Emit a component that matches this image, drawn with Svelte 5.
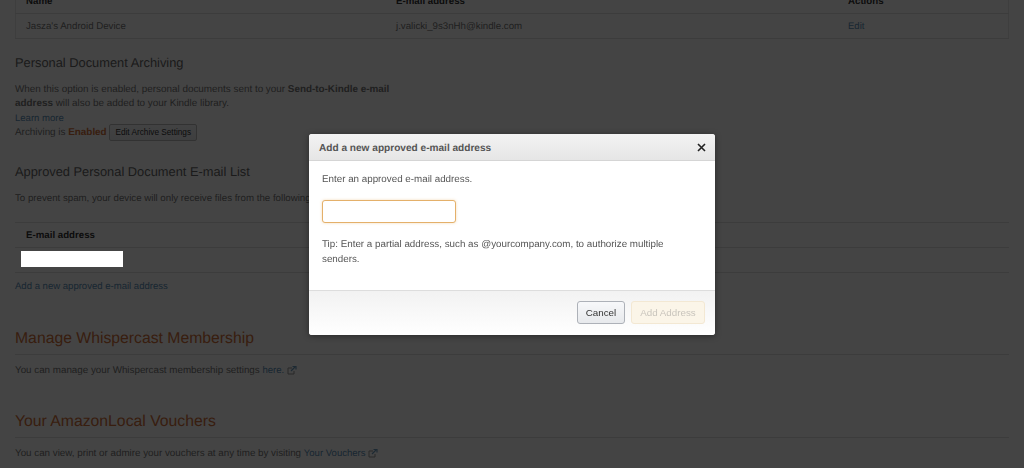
<script>
  let email = '';
</script>

<div class="page">
  <table class="devices">
    <thead>
      <tr>
        <th class="c-name">Name</th>
        <th class="c-mail">E-mail address</th>
        <th>Actions</th>
      </tr>
    </thead>
    <tbody>
      <tr>
        <td>Jasza's Android Device</td>
        <td>j.valicki_9s3nHh@kindle.com</td>
        <td><a href="#edit">Edit</a></td>
      </tr>
    </tbody>
  </table>

  <section class="archiving">
    <h3>Personal Document Archiving</h3>
    <p class="narrow">
      When this option is enabled, personal documents sent to your <b>Send-to-Kindle e-mail address</b> will also be added to your Kindle library.<br />
      <a href="#more">Learn more</a><br />
      Archiving is <b class="enabled">Enabled</b>
      <button class="small">Edit Archive Settings</button>
    </p>
  </section>

  <section class="approved">
    <h3>Approved Personal Document E-mail List</h3>
    <p>To prevent spam, your device will only receive files from the following e-mail addresses you have authorized.</p>
    <div class="list">
      <div class="list-head">E-mail address</div>
      <div class="list-row"><span class="redacted"></span></div>
    </div>
    <a class="add" href="#add">Add a new approved e-mail address</a>
  </section>

  <section class="big first">
    <h2>Manage Whispercast Membership</h2>
    <p>You can manage your Whispercast membership settings <a href="#here">here.</a>
      <svg class="ext" viewBox="0 0 10 10" width="10" height="10"><path d="M1 3h4M1 3v6h6V6" fill="none" stroke="#999" stroke-width="1"/><path d="M4 6l4-4M5.5 1.5H9v3" fill="none" stroke="#6f9cc0" stroke-width="1.2"/></svg>
    </p>
  </section>

  <section class="big">
    <h2>Your AmazonLocal Vouchers</h2>
    <p>You can view, print or admire your vouchers at any time by visiting <a href="#v">Your Vouchers</a>
      <svg class="ext" viewBox="0 0 10 10" width="10" height="10"><path d="M1 3h4M1 3v6h6V6" fill="none" stroke="#999" stroke-width="1"/><path d="M4 6l4-4M5.5 1.5H9v3" fill="none" stroke="#6f9cc0" stroke-width="1.2"/></svg>
    </p>
  </section>
</div>

<div class="overlay"></div>

<div class="dialog" role="dialog" aria-label="Add a new approved e-mail address">
  <header>
    <strong>Add a new approved e-mail address</strong>
    <svg class="close" viewBox="0 0 9 9" width="9" height="9"><path d="M1 1l7 7M8 1l-7 7" stroke="#222" stroke-width="1.6" fill="none"/></svg>
  </header>
  <div class="body">
    <p>Enter an approved e-mail address.</p>
    <input type="text" bind:value={email} />
    <p class="tip">Tip: Enter a partial address, such as @yourcompany.com, to authorize multiple senders.</p>
  </div>
  <footer>
    <button class="cancel">Cancel</button>
    <button class="submit" disabled>Add Address</button>
  </footer>
</div>

<style>
  :global(body) {
    margin: 0;
    background: #fff;
    overflow: hidden;
    text-rendering: geometricPrecision;
  }

  .page {
    height: 468px;
    overflow: hidden;
    box-sizing: border-box;
    padding: 0 15px;
    font: 9.7px/14.3px "Liberation Sans", Arial, sans-serif;
    color: #777;
  }

  a {
    color: #5c8fb8;
    text-decoration: none;
    font-size: 9.55px;
  }

  p {
    margin: 0;
  }

  h3 {
    margin: 0;
    font-size: 12.85px;
    line-height: 16px;
    font-weight: 400;
    color: #666;
  }

  h2 {
    margin: 0;
    padding-bottom: 5px;
    border-bottom: 1px solid #e2e2e2;
    font-size: 15.75px;
    line-height: 20px;
    font-weight: 400;
    color: #d2703a;
  }

  .devices {
    width: 994px;
    margin-top: -11px;
    border-collapse: collapse;
    table-layout: fixed;
    border-left: 1px solid #e8e8e8;
    border-right: 1px solid #e8e8e8;
  }

  .devices th,
  .devices td {
    padding: 2px 10px 0;
    text-align: left;
    height: 22px;
    border-bottom: 1px solid #e2e2e2;
  }

  .devices td {
    padding-top: 3px;
    height: 21px;
  }

  .devices th {
    color: #333;
  }

  .c-name {
    width: 350px;
  }

  .c-mail {
    width: 432px;
  }

  .archiving {
    margin-top: 16px;
  }

  .archiving .narrow {
    width: 392px;
    margin-top: 12px;
    font-size: 9.9px;
  }

  .enabled {
    color: #d2703a;
  }

  .small {
    height: 17px;
    padding: 0 5px;
    margin-left: 0;
    border: 1px solid #bbb;
    border-radius: 2px;
    background: linear-gradient(#f7f8fa, #e7e9ec);
    color: #333;
    font: 8.25px "Liberation Sans", Arial, sans-serif;
    vertical-align: top;
    margin-top: -2px;
  }

  .approved {
    margin-top: 23px;
  }

  .approved p {
    margin-top: 12px;
  }

  .list {
    margin-top: 16px;
    border-top: 1px solid #e2e2e2;
    border-bottom: 1px solid #e2e2e2;
  }

  .list-head {
    height: 24px;
    line-height: 25px;
    padding-left: 11px;
    font-weight: 700;
    color: #333;
    border-bottom: 1px solid #e2e2e2;
  }

  .list-row {
    height: 24px;
    box-sizing: border-box;
    padding: 3px 0 0 6px;
  }

  /* sits above the overlay, it was blanked out in the source */
  .redacted {
    display: block;
    position: relative;
    z-index: 2;
    width: 102px;
    height: 16px;
    background: #fff;
  }

  .add {
    display: block;
    margin-top: 7px;
  }

  .big.first {
    margin-top: 35px;
  }

  .big {
    margin-top: 33px;
  }

  .big p {
    margin-top: 9px;
    font-size: 9.8px;
  }

  .ext {
    vertical-align: -2px;
  }

  .overlay {
    position: fixed;
    inset: 0;
    background: rgba(0, 0, 0, 0.733);
    backdrop-filter: blur(0.5px);
  }

  .dialog {
    position: fixed;
    left: 309px;
    top: 134px;
    width: 406px;
    height: 201px;
    display: flex;
    flex-direction: column;
    background: #fff;
    border-radius: 3px;
    box-shadow: 0 1px 6px rgba(0, 0, 0, 0.4);
    font: 9.8px/14.3px "Liberation Sans", Arial, sans-serif;
    color: #555;
    z-index: 3;
    overflow: hidden;
    filter: blur(0.3px);
  }

  header {
    height: 26px;
    flex: none;
    display: flex;
    align-items: center;
    justify-content: space-between;
    padding: 0 9px 0 10px;
    background: linear-gradient(#f3f3f3, #e6e6e6);
    border-bottom: 1px solid #d5d5d5;
    color: #555;
    font-size: 10.1px;
  }

  header strong {
    padding-top: 4px;
  }

  .body {
    flex: 1;
    padding: 12px 13px 0;
  }

  input {
    display: block;
    box-sizing: border-box;
    width: 134px;
    height: 23px;
    margin: 13px 0 0;
    border: 1px solid #e4b06a;
    border-radius: 3px;
    box-shadow: 0 0 3px rgba(228, 168, 83, 0.4);
    outline: none;
  }

  .tip {
    margin-top: 15px;
  }

  footer {
    height: 45px;
    flex: none;
    box-sizing: border-box;
    display: flex;
    align-items: flex-start;
    justify-content: flex-end;
    gap: 6px;
    padding: 10px 10px 0;
    background: linear-gradient(#f2f2f2, #fff);
    border-top: 1px solid #ddd;
  }

  footer button {
    height: 23px;
    padding: 0;
    border-radius: 3px;
    font: 9.8px "Liberation Sans", Arial, sans-serif;
  }

  .cancel {
    width: 48px;
    border: 1px solid #adb1b8;
    background: linear-gradient(#f7f8fa, #e7e9ec);
    color: #333;
  }

  .submit {
    width: 74px;
    border: 1px solid #f3e8d3;
    background: #fbf5e8;
    color: #c9c5bd;
  }
</style>
